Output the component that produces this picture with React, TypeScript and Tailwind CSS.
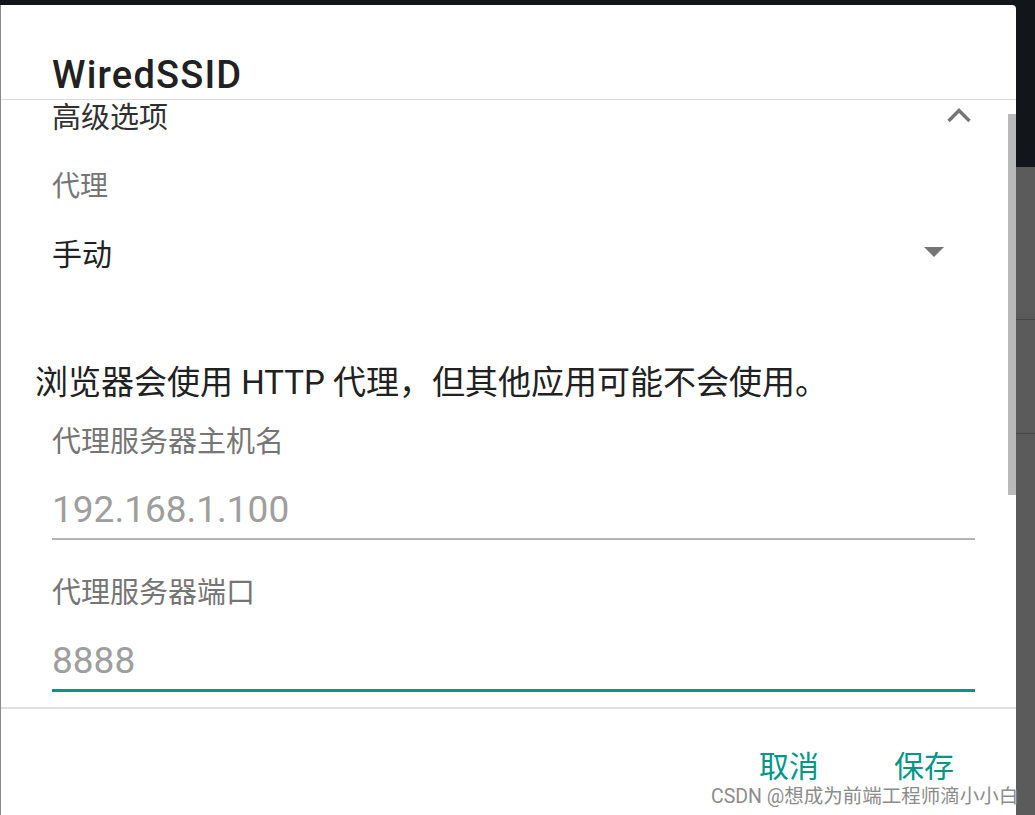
import React from "react";

const cjk = '"Noto Sans CJK SC", sans-serif';
const mixed = 'Roboto, "Noto Sans CJK SC", sans-serif';

function ChevronUp() {
  return (
    <svg width="26" height="16" viewBox="0 0 26 16" fill="none">
      <path d="M2.5 14 L13 3.5 L23.5 14" stroke="#757575" strokeWidth="3.4" />
    </svg>
  );
}

function Caret() {
  return (
    <svg width="20" height="10" viewBox="0 0 20 10">
      <path d="M0 0 H20 L10 10 Z" fill="#757575" />
    </svg>
  );
}

function Field({ label, value, active }: { label: string; value: string; active?: boolean }) {
  return (
    <div className="pl-[51px] pr-[41px]">
      <div className="h-[38px] text-[29px] leading-[38px] text-[#757575]" style={{ fontFamily: cjk }}>
        {label}
      </div>
      <div
        className={
          active
            ? "mt-[30px] border-b-[3px] border-[#009688] pb-[6px]"
            : "mt-[30px] border-b-2 border-[#b3b3b3] pb-[6px]"
        }
      >
        <div className="h-[44px] text-[37px] leading-[44px] text-[#9e9e9e]" style={{ fontFamily: "Roboto, sans-serif" }}>
          {value}
        </div>
      </div>
    </div>
  );
}

export default function App() {
  return (
    <div className="relative flex h-[815px] w-[1035px] overflow-hidden bg-[#12161a]">
      <div className="relative mt-[5px] flex w-[1016px] flex-col rounded-tr-[4px] border-l border-[#8a8a8a] bg-white">
        <header className="h-[95px] border-b border-[#dcdcdc] pl-[51px] pt-[48px]">
          <h1
            className="text-[38px] font-medium leading-[44px] tracking-[1.2px] text-[#212121]"
            style={{ fontFamily: "Roboto, sans-serif" }}
          >
            WiredSSID
          </h1>
        </header>

        <div className="flex h-[30px] items-center justify-between pl-[51px] pr-[44px]">
          <span className="text-[29px] leading-[30px] text-[#303030]" style={{ fontFamily: cjk }}>
            高级选项
          </span>
          <ChevronUp />
        </div>

        <div className="mt-[34px] h-[40px] pl-[51px] text-[28px] leading-[40px] text-[#757575]" style={{ fontFamily: cjk }}>
          代理
        </div>

        <div className="mt-[23px] flex h-[50px] items-center justify-between pl-[51px] pr-[72px]">
          <span className="text-[30px] leading-[50px] text-[#212121]" style={{ fontFamily: cjk }}>
            手动
          </span>
          <Caret />
        </div>

        <p className="mt-[86px] h-[40px] pl-[34px] text-[33px] leading-[40px] text-[#212121]" style={{ fontFamily: mixed }}>
          浏览器会使用 HTTP 代理，但其他应用可能不会使用。
        </p>

        <div className="mt-[17px]">
          <Field label="代理服务器主机名" value="192.168.1.100" />
        </div>
        <div className="mt-[31px]">
          <Field label="代理服务器端口" value="8888" active />
        </div>

        <div className="mt-[15px] border-t-2 border-[#e0e0e0]" />

        <div className="flex justify-end gap-[75px] pr-[62px] pt-[37px]">
          <button className="text-[30px] leading-[36px] text-[#009688]" style={{ fontFamily: cjk }}>
            取消
          </button>
          <button className="text-[30px] leading-[36px] text-[#009688]" style={{ fontFamily: cjk }}>
            保存
          </button>
        </div>

        <div className="absolute right-0 top-[109px] h-[381px] w-[8px] bg-[#b9b9b9]" />
      </div>

      <div className="flex w-[19px] flex-col">
        <div className="h-[167px] bg-[#12161a]" />
        <div className="h-[152px] bg-[#5b5b5b]" />
        <div className="h-[114px] border-t border-[#474747] bg-[#5b5b5b]" />
        <div className="flex-1 border-t border-[#474747] bg-[#5b5b5b]" />
      </div>

      <div
        className="absolute left-[711px] top-[784px] whitespace-nowrap text-[19.5px] leading-[26px] text-[#8c8c8c]"
        style={{ fontFamily: mixed, textShadow: "0 0 2px #fff, 0 0 1px #fff" }}
      >
        CSDN @想成为前端工程师滴小小白
      </div>
    </div>
  );
}
